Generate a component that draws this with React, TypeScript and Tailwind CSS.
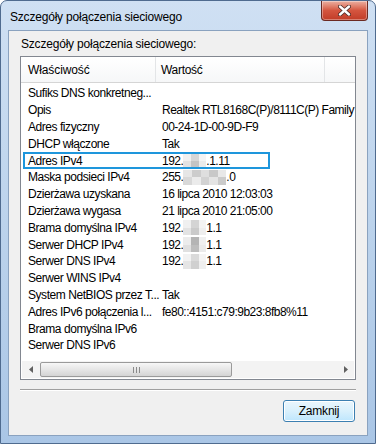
import React from 'react';

// Fragment wartości: tekst albo rozmyty (zamazany) kawałek adresu
type Part = string | { blur: number; shades: string[] };

type Row = {
  name: string;
  value?: Part[];
  selected?: boolean;
};

const ip = (tail: string, shades: string[]): Part[] => ['192.', { blur: 23, shades }, tail];

const rows: Row[] = [
  { name: 'Sufiks DNS konkretneg...' },
  { name: 'Opis', value: ['Realtek RTL8168C(P)/8111C(P) Family PCI-E Gigabit Ethernet NIC'] },
  { name: 'Adres fizyczny', value: ['00-24-1D-00-9D-F9'] },
  { name: 'DHCP włączone', value: ['Tak'] },
  { name: 'Adres IPv4', value: ip('.1.11', ['#f0f0f0', '#d6d6d6', '#f4f4f4', '#e2e2e2', '#c4c4c4', '#ebebeb']), selected: true },
  { name: 'Maska podsieci IPv4', value: ['255.', { blur: 43, shades: ['#e6e6e6', '#cccccc', '#dedede', '#c8c8c8', '#e8e8e8', '#d8d8d8', '#ebebeb', '#d2d2d2', '#e4e4e4', '#cbcbcb'] }, '.0'] },
  { name: 'Dzierżawa uzyskana', value: ['16 lipca 2010 12:03:03'] },
  { name: 'Dzierżawa wygasa', value: ['21 lipca 2010 21:05:00'] },
  { name: 'Brama domyślna IPv4', value: ip('1.1', ['#f0f0f0', '#d4d4d4', '#f3f3f3', '#e3e3e3', '#cacaca', '#eeeeee']) },
  { name: 'Serwer DHCP IPv4', value: ip('1.1', ['#ececec', '#b4b4b4', '#efefef', '#e0e0e0', '#bdbdbd', '#eaeaea']) },
  { name: 'Serwer DNS IPv4', value: ip('1.1', ['#f2f2f2', '#dadada', '#f4f4f4', '#e5e5e5', '#d0d0d0', '#efefef']) },
  { name: 'Serwer WINS IPv4' },
  { name: 'System NetBIOS przez T...', value: ['Tak'] },
  { name: 'Adres IPv6 połączenia l...', value: ['fe80::4151:c79:9b23:8fb8%11'] },
  { name: 'Brama domyślna IPv6' },
  { name: 'Serwer DNS IPv6' },
];

const Blur = ({ width, shades }: { width: number; shades: string[] }) => {
  const cols = shades.length / 2;
  return (
    <span
      className="inline-grid h-[15px] align-middle"
      style={{ width, gridTemplateColumns: `repeat(${cols}, 1fr)` }}
    >
      {shades.map((c, i) => (
        <span key={i} style={{ background: c }} />
      ))}
    </span>
  );
};

const CloseButton = () => (
  <div className="absolute top-0 right-[7px] w-[47px] h-[20px] rounded-b-[4px] border border-t-0 border-[#6b2a22] bg-gradient-to-b from-[#eab0a2] via-[#d4553f] to-[#c13c27] flex items-center justify-center shadow-[inset_0_0_0_1px_rgba(255,255,255,0.35)]">
    <svg width="13" height="11" viewBox="0 0 13 11">
      <path d="M2 1.5 L11 9.5 M11 1.5 L2 9.5" stroke="#4a2a26" strokeWidth="4" strokeLinecap="round" />
      <path d="M2 1.5 L11 9.5 M11 1.5 L2 9.5" stroke="#ffffff" strokeWidth="2.4" strokeLinecap="round" />
    </svg>
  </div>
);

const ScrollArrow = ({ dir }: { dir: 'l' | 'r' }) => (
  <div className="w-[17px] h-full flex items-center justify-center">
    <svg width="4" height="7" viewBox="0 0 4 7">
      {dir === 'l' ? <path d="M4 0 L0 3.5 L4 7 Z" fill="#606060" /> : <path d="M0 0 L4 3.5 L0 7 Z" fill="#606060" />}
    </svg>
  </div>
);

export default function App() {
  return (
    <div
      className="w-[376px] h-[444px] relative rounded-t-[7px] border border-[#4f6b8f] bg-gradient-to-b from-[#cfe0f3] via-[#bcd3ec] to-[#aac6e6] overflow-hidden text-[12px] text-black"
      style={{ fontFamily: '"Liberation Sans", Arial, sans-serif' }}
    >
      <div className="h-[29px] flex items-center pl-[9px] pt-[2px] tracking-[-0.2px]">
        Szczegóły połączenia sieciowego
      </div>
      <CloseButton />

      <div className="mx-[7px] h-[406px] border border-[#8aa2bf] bg-[#f0f0f0] flex flex-col px-[11px]">
        <div className="h-[25px] flex items-end pb-[3px] pl-[1px] tracking-[-0.2px]">Szczegóły połączenia sieciowego:</div>

        <div className="h-[324px] border border-[#828790] bg-white flex flex-col overflow-hidden">
          <div className="h-[26px] flex bg-gradient-to-b from-white to-[#f6f7f8] border-b border-[#d5d5d5]">
            <div className="w-[135px] flex items-center pl-[7px] border-r border-[#e3e5e7] tracking-[-0.1px]">Właściwość</div>
            <div className="w-[169px] flex items-center pl-[5px] border-r border-[#e3e5e7] tracking-[-0.3px]">Wartość</div>
            <div className="flex-1" />
          </div>

          <div className="flex-1 pt-[2px] overflow-hidden">
            {rows.map((r) => (
              <div key={r.name} className="relative h-[16.8px] flex items-center whitespace-nowrap">
                <div className="w-[135px] shrink-0 pl-[7px] tracking-[-0.45px]">{r.name}</div>
                <div className="pl-[6px] flex items-center tracking-[-0.5px]">
                  {r.value?.map((p, i) =>
                    typeof p === 'string' ? <span key={i}>{p}</span> : <Blur key={i} width={p.blur} shades={p.shades} />
                  )}
                </div>
                {r.selected && (
                  <div className="absolute left-[2px] top-[0px] w-[247px] h-[17px] border-2 border-[#1e96dc]" />
                )}
              </div>
            ))}
          </div>

          <div className="h-[17px] mb-[1px] mx-[1px] flex items-center bg-[#f3f3f3]">
            <ScrollArrow dir="l" />
            <div className="ml-[1px] w-[192px] h-[15px] rounded-[2px] border border-[#9a9a9a] bg-gradient-to-b from-[#f7f7f7] via-[#e6e6e6] to-[#d4d4d4] flex items-center justify-center">
              <div className="flex gap-[2px]">
                <span className="w-[1px] h-[6px] bg-[#8a8a8a]" />
                <span className="w-[1px] h-[6px] bg-[#8a8a8a]" />
                <span className="w-[1px] h-[6px] bg-[#8a8a8a]" />
              </div>
            </div>
            <div className="flex-1" />
            <ScrollArrow dir="r" />
          </div>
        </div>

        <div className="mt-[9px] h-[2px] w-[336px] border-t border-[#a0a0a0] border-b border-b-white" />

        <div className="mt-[9px] flex justify-end pr-[1px]">
          <button className="w-[72px] h-[22px] rounded-[3px] border border-[#3c7fb1] bg-gradient-to-b from-[#eaf6fd] via-[#d9f0fc] to-[#bee6fd] shadow-[inset_0_0_0_1px_#fff] text-[12px] tracking-[-0.2px]">
            Zamknij
          </button>
        </div>
      </div>
    </div>
  );
}
